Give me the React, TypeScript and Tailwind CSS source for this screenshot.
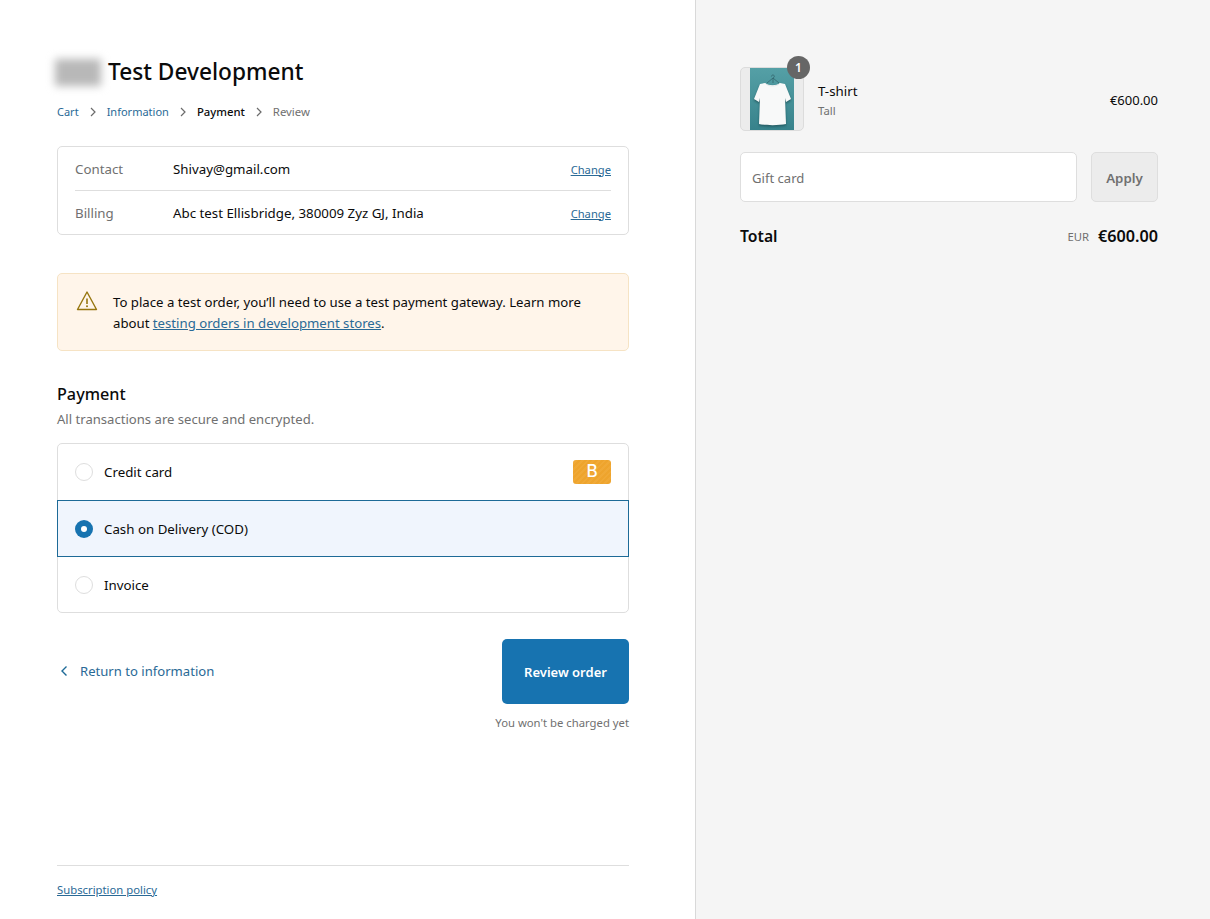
import React from "react";

const Chevron = () => (
  <svg width="8" height="10" viewBox="0 0 8 10" fill="none" className="shrink-0">
    <path d="M2 1l4 4-4 4" stroke="#6b6b6b" strokeWidth="1.2" />
  </svg>
);

function Radio({ on }: { on?: boolean }) {
  return on ? (
    <span className="w-[18px] h-[18px] rounded-full bg-[#1773b0] flex items-center justify-center shrink-0">
      <span className="w-[6px] h-[6px] rounded-full bg-white" />
    </span>
  ) : (
    <span className="w-[18px] h-[18px] rounded-full border border-[#dedede] bg-white shrink-0" />
  );
}

const Tee = () => (
  <svg viewBox="0 0 44 62" width="44" height="62" className="block">
    <defs>
      <linearGradient id="bg" x1="0" y1="0" x2="0" y2="1">
        <stop offset="0" stopColor="#55a0a6" />
        <stop offset="1" stopColor="#37828b" />
      </linearGradient>
      <filter id="soft" x="-20%" y="-20%" width="140%" height="140%">
        <feGaussianBlur stdDeviation="1.200" />
      </filter>
    </defs>
    <rect width="44" height="62" fill="url(#bg)" />
    <path d="M23 15V10c2-1 1.500-3 0-3s-1.500 1-1.500 1.500M23 10l-6 5M23 10l6 5" stroke="#2f5f66" strokeWidth="0.7" fill="none" />
    <path d="M15 15c3 3 12 3 15 0l5 1 6 15-5 3-1-4 1 26c-7 1.500-20 1.500-27 0l1-26-1 4-5-3 6-15z" fill="#173f46" opacity="0.6" filter="url(#soft)" transform="translate(0 1.500)" />
    <path d="M15 15c3 3 12 3 15 0l5 1 6 15-5 3-1-4 1 26c-7 1.500-20 1.500-27 0l1-26-1 4-5-3 6-15z" fill="#f8f9f9" />
    <path d="M15 15c3 4 12 4 15 0" stroke="#dfe5e6" strokeWidth="0.8" fill="none" />
  </svg>
);

export default function App() {
  return (
    <div className="min-h-[919px] flex font-['Noto_Sans','Open_Sans',sans-serif] text-[#0b0b0b] bg-white">
      <main className="w-[696px] h-[919px] shrink-0 border-r border-[#d9d9d9] pl-[57px] pr-[66px] flex flex-col">
        <header className="pt-[57px] flex items-center">
          <div className="w-[46px] h-[27px] bg-[#b8b8b8] blur-[4px] -ml-[2px] mr-[7px]" />
          <h1 className="text-[22.700px] leading-[30px] font-medium">Test Development</h1>
        </header>
        <nav className="mt-[16px] flex items-center text-[11px] leading-[18px]">
          <a className="text-[#2a6a96]">Cart</a>
          <span className="mx-[10px]"><Chevron /></span>
          <a className="text-[#2a6a96]">Information</a>
          <span className="mx-[10px]"><Chevron /></span>
          <span className="font-medium text-[11.300px]">Payment</span>
          <span className="mx-[10px]"><Chevron /></span>
          <span className="text-[#707070] text-[11.400px]">Review</span>
        </nav>

        <section className="mt-[25px] border border-[#dedede] rounded-[5px] px-[17px] text-[13.300px] leading-[20px]">
          <div className="h-[44px] flex items-center border-b border-[#dedede]">
            <span className="w-[98px] text-[#707070]">Contact</span>
            <span className="flex-1">Shivay@gmail.com</span>
            <a className="text-[11.200px] pt-[2px] underline text-[#2a6a96]">Change</a>
          </div>
          <div className="h-[43px] flex items-center">
            <span className="w-[98px] text-[#707070]">Billing</span>
            <span className="flex-1">Abc test Ellisbridge, 380009 Zyz GJ, India</span>
            <a className="text-[11.200px] pt-[2px] underline text-[#2a6a96]">Change</a>
          </div>
        </section>

        <section className="mt-[38px] h-[78px] border border-[#f6e3c4] bg-[#fff5ea] rounded-[5px] pl-[18px] pr-[24px] flex items-start pt-[18px]">
          <svg width="22" height="22" viewBox="0 0 22 22" fill="none" className="shrink-0 mr-[15px] -mt-[2px]">
            <path d="M11 2L20.500 19.500H1.500z" stroke="#97760f" strokeWidth="1.400" strokeLinejoin="round" />
            <path d="M11 8.500v5.500" stroke="#97760f" strokeWidth="1.600" />
            <circle cx="11" cy="16.300" r="1" fill="#97760f" />
          </svg>
          <p className="text-[13.200px] leading-[21px]">
            To place a test order, you’ll need to use a test payment gateway. Learn more about{" "}
            <a className="underline text-[#2a6a96]">testing orders in development stores</a>.
          </p>
        </section>

        <h2 className="mt-[31px] text-[16.200px] leading-[24px] font-medium">Payment</h2>
        <p className="mt-[3px] text-[13.100px] leading-[20px] text-[#707070]">All transactions are secure and encrypted.</p>

        <section className="mt-[14px] border border-[#dedede] rounded-[5px] text-[13.300px]">
          <div className="h-[56px] flex items-center pl-[17px] pr-[17px]">
            <Radio />
            <span className="ml-[11px] pt-[2px] flex-1">Credit card</span>
            <span className="w-[38px] h-[24px] rounded-[3px] bg-[repeating-linear-gradient(135deg,#eea42d_0,#eea42d_2px,#f0a937_2px,#f0a937_4px)] text-white font-['Inter',sans-serif] text-[17px] font-medium flex items-center justify-center">B</span>
          </div>
          <div className="h-[57px] -mx-px flex items-center pl-[17px] border border-[#1d6a97] bg-[#f0f5fd]">
            <Radio on />
            <span className="ml-[11px] pt-[2px]">Cash on Delivery (COD)</span>
          </div>
          <div className="h-[55px] flex items-center pl-[17px]">
            <Radio />
            <span className="ml-[11px] pt-[2px]">Invoice</span>
          </div>
        </section>

        <div className="mt-[26px] flex justify-between items-start">
          <a className="mt-[22px] flex items-center text-[13.100px] leading-[20px] text-[#2a6a96]">
            <svg width="10" height="12" viewBox="0 0 10 12" fill="none" className="ml-[2px] mr-[11px]">
              <path d="M7.500 1.500L3 6l4.500 4.500" stroke="#1d6a97" strokeWidth="1.400" />
            </svg>
            Return to information
          </a>
          <button className="w-[127px] h-[65px] rounded-[5px] bg-[#1773b0] pt-[2px] text-white text-[13px] font-semibold">Review order</button>
        </div>
        <p className="mt-[10px] text-right text-[11.300px] leading-[18px] text-[#707070]">You won't be charged yet</p>

        <footer className="mt-auto h-[54px] border-t border-[#dedede] pt-[15px] text-[11.300px] leading-[18px]">
          <a className="underline text-[#2a6a96]">Subscription policy</a>
        </footer>
      </main>

      <aside className="flex-1 h-[919px] bg-[#f5f5f5] pl-[44px] pr-[52px] pt-[67px]">
        <div className="flex items-center h-[64px]">
          <div className="relative w-[64px] h-[64px] rounded-[5px] border border-[#dcdcdc] bg-[#ececec] flex justify-center shrink-0">
            <Tee />
            <span className="absolute -top-[12px] -right-[7px] w-[23px] h-[23px] rounded-full bg-[#666666] text-white text-[12px] font-semibold flex items-center justify-center">1</span>
          </div>
          <div className="ml-[14px] flex-1 mt-[2px]">
            <div className="text-[13.300px] leading-[20px]">T-shirt</div>
            <div className="text-[11.300px] leading-[18px] text-[#707070] mt-[1px]">Tall</div>
          </div>
          <div className="text-[13px] mt-[3px]">€600.00</div>
        </div>

        <div className="mt-[21px] flex gap-[14px]">
          <div className="flex-1 h-[50px] bg-white border border-[#dedede] rounded-[5px] pl-[11px] pt-[3px] flex items-center text-[13.100px] text-[#707070]">Gift card</div>
          <button className="w-[67px] h-[50px] bg-[#ececec] border border-[#dedede] rounded-[5px] pt-[3px] text-[13.300px] font-semibold text-[#707070]">Apply</button>
        </div>

        <div className="mt-[22px] flex items-center justify-between">
          <span className="text-[15.700px] leading-[24px] font-semibold">Total</span>
          <span className="flex items-center">
            <span className="text-[11.300px] text-[#707070] mr-[9px] mt-[2px]">EUR</span>
            <span className="text-[16.200px] leading-[24px] font-semibold">€600.00</span>
          </span>
        </div>
      </aside>
    </div>
  );
}
